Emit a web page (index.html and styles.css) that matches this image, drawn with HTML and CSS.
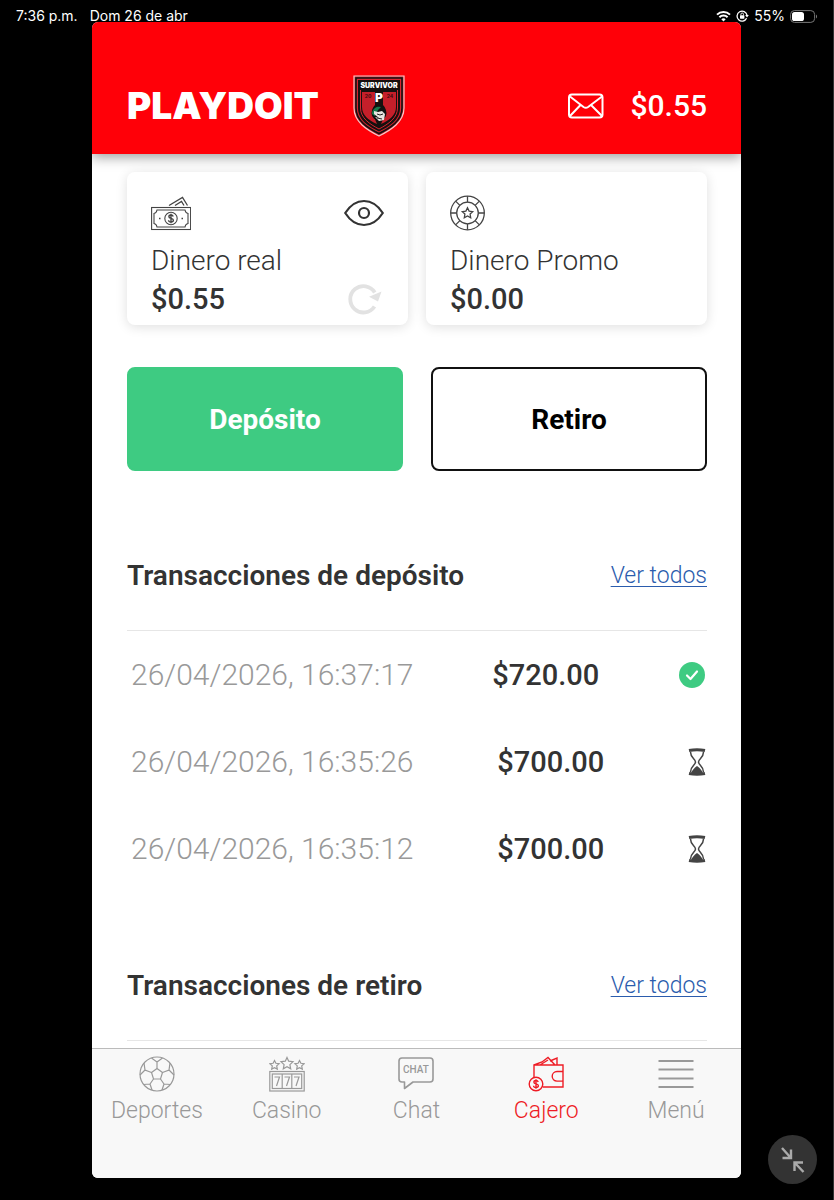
FILE: index.html
```html
<!DOCTYPE html>
<html lang="es">
<head>
  <meta charset="UTF-8" />
  <meta name="viewport" content="width=device-width, initial-scale=1" />
  <title>Playdoit - Cajero</title>
  <link rel="stylesheet" href="styles.css">
</head>
<body>

<div class="status-bar">
  <div class="status-left"><span>7:36 p.m.</span><span>Dom 26 de abr</span></div>
  <div class="status-right">
    <svg width="15" height="12" viewBox="0 0 15 12" fill="none" stroke="#fff" stroke-width="2">
      <path d="M1 4.6a9.3 9.3 0 0 1 13 0M3.4 7.3a5.8 5.8 0 0 1 8.2 0"/>
      <path d="M7.5 11.6 5.3 9.3a3.2 3.2 0 0 1 4.4 0z" fill="#fff" stroke="none"/>
    </svg>
    <svg width="13" height="12" viewBox="0 0 13 12" fill="none" stroke="#fff">
      <path d="M10.6 8.3A5 5 0 1 1 11 5.2" stroke-width="1.3"/>
      <path d="M9.2 5h3.6L11 7.4z" fill="#fff" stroke="none"/>
      <rect x="4" y="5.3" width="4.4" height="3.4" rx=".6" fill="#fff" stroke="none"/>
      <path d="M4.9 5.4V4.3a1.3 1.3 0 0 1 2.6 0v1.1" stroke-width=".9"/>
    </svg>
    <span>55%</span>
    <svg width="28" height="13" viewBox="0 0 28 13">
      <rect x=".6" y=".6" width="24" height="11.8" rx="3.8" fill="none" stroke="#777"/>
      <rect x="2" y="2" width="12" height="9" rx="2.6" fill="#fff"/>
      <path d="M26 4.5v4c1.4-.6 1.4-3.4 0-4z" fill="#777"/>
    </svg>
  </div>
</div>

<div class="app">
  <header>
    <a href="#" class="logo">PLAYDOIT</a>
    <a href="#" class="shield" title="Survivor">
      <svg width="52" height="62" viewBox="0 0 52 62">
        <path d="M1 1h50v32c0 14-13 22-25 28C14 55 1 47 1 33z" fill="#b5202b" stroke="#f5c9c9" stroke-width="1.2"/>
        <path d="M3 3h46v30c0 13-12 20-23 25.500C15 53 3 46 3 33z" fill="#d5242f" stroke="#111" stroke-width="1.6"/>
        <path d="M5 5h42v28c0 12-11 18.500-21 23.500C16 51.500 5 45 5 33z" fill="#15100f"/>
        <path d="M9 17h13v13c-4 4-3 8-1 12l3 7C15 45 9 40 9 32z" fill="#c51f2a"/>
        <path d="M43 17H30v13c4 4 3 8 1 12l-3 7c9-4 15-9 15-17z" fill="#c51f2a"/>
        <path d="M7.500 15v18c0 10 9 16 18.500 21C35.500 49 44.500 43 44.500 33V15" fill="none" stroke="#d5242f" stroke-width="1"/>
        <circle cx="26" cy="38" r="7.500" fill="#111"/>
        <path d="M19 39a7 7 0 0 1 9-7l-3 3-3 6z" fill="#167a4b"/>
        <path d="m21 36 4 1 4-1 3 3-1 6-5 1-4-4 4 1-5-4z" fill="#e9e6e2"/>
        <path d="m24 39 3 1 3-1M24 43l5 1" stroke="#222" stroke-width="1" fill="none"/>
        <text x="26" y="12.500" text-anchor="middle" class="shield-name">SURVIVOR</text>
        <text x="26" y="27" text-anchor="middle" class="shield-letter">P</text>
        <text x="15" y="23" text-anchor="middle" class="shield-year">20</text>
        <text x="37" y="23" text-anchor="middle" class="shield-year">24</text>
      </svg>
    </a>
    <a href="#" class="mail" title="Mensajes">
      <svg width="36" height="26" viewBox="0 0 36 26" fill="none" stroke="#fff" stroke-width="2" stroke-linejoin="round">
        <rect x="1" y="1.500" width="33.500" height="23" rx="3"/>
        <path d="M2 3.500 15.500 14q2.300 1.500 4.600 0L34 3.500M2 23l10.500-11M34 23 23 12"/>
      </svg>
    </a>
    <span class="balance">$0.55</span>
  </header>

  <main>
    <div class="wallets">
      <section class="wallet">
        <div class="wallet-row wallet-icons">
          <svg width="40" height="36" viewBox="0 0 40 36" fill="none" stroke="#444" stroke-width="1.100">
            <rect x=".6" y="12.500" width="39" height="22"/>
            <path d="M6 15h28q.5 3 3 3.500v10q-2.500.5-3 3.500H6q-.5-3-3-3.500v-10Q5.500 18 6 15z"/>
            <circle cx="20" cy="23.500" r="6.200"/>
            <path d="M22.200 21.500q-.4-1.500-2.300-1.500-2 0-2 1.700c0 2.200 4.500 1.300 4.500 3.600 0 1.100-.9 1.700-2.400 1.700-1.700 0-2.400-.8-2.500-1.800M20 18.700v9.600" stroke-width="1.400"/>
            <path d="M18 10.500 31.500 2.500l5 8M24 10.500 30.500 6.500l2.500 4" stroke-width="1.300"/>
            <path d="M8 23.500h1.500M30.500 23.500H32" stroke-width="1.600"/>
          </svg>
          <button class="icon-btn" title="Ocultar saldo">
            <svg width="40" height="36" viewBox="0 0 40 36" fill="none" stroke="#333" stroke-width="2.200">
              <path d="M1.200 18C6 10.500 12.500 6 20 6s14 4.500 18.800 12C34 25.500 27.500 30 20 30S6 25.500 1.200 18z" stroke-linejoin="round"/>
              <circle cx="20" cy="18" r="5"/>
            </svg>
          </button>
        </div>
        <h3>Dinero real</h3>
        <div class="wallet-row">
          <span class="amount">$0.55</span>
          <button class="icon-btn" title="Actualizar">
            <svg width="40" height="36" viewBox="0 0 40 36" fill="none" stroke="#e2e2e2" stroke-width="3.800">
              <path d="M30.500 25.500A13.200 13.200 0 1 1 30.800 11.500"/>
              <path d="M25 15.800 37.500 10.500 34 20.500z" fill="#e2e2e2" stroke="none"/>
            </svg>
          </button>
        </div>
      </section>

      <section class="wallet">
        <div class="wallet-row wallet-icons">
          <svg width="36" height="36" viewBox="0 0 36 36" fill="none" stroke="#444" stroke-width="1.300">
            <circle cx="17.500" cy="18" r="16.800"/>
            <circle cx="17.500" cy="18" r="10.800"/>
            <path d="M17.500 1.200v6M17.500 28.800v6M.7 18h6M28.300 18h6M5.600 6.100l4.300 4.300M25.100 25.600l4.300 4.300M5.600 29.900l4.300-4.300M25.100 10.400l4.300-4.300"/>
            <path d="m17.500 12.800 1.600 3.300 3.600.5-2.600 2.500.6 3.600-3.200-1.700-3.200 1.700.6-3.600-2.600-2.500 3.600-.5z"/>
          </svg>
        </div>
        <h3>Dinero Promo</h3>
        <div class="wallet-row"><span class="amount">$0.00</span></div>
      </section>
    </div>

    <div class="actions">
      <button class="btn btn-deposit">Depósito</button>
      <button class="btn btn-withdraw">Retiro</button>
    </div>

    <section class="transactions">
      <div class="section-head">
        <h2>Transacciones de depósito</h2>
        <a href="#">Ver todos</a>
      </div>
      <table>
        <tbody>
          <tr>
            <td class="date">26/04/2026, 16:37:17</td>
            <td class="amount">$720.00</td>
            <td class="state">
              <svg width="28" height="28" viewBox="0 0 28 28">
                <circle cx="14" cy="14" r="13" fill="#3ecb82"/>
                <path d="m9 14.500 3.500 3.500 6.500-7.500" fill="none" stroke="#fff" stroke-width="2.200" stroke-linecap="round" stroke-linejoin="round"/>
              </svg>
            </td>
          </tr>
          <tr>
            <td class="date">26/04/2026, 16:35:26</td>
            <td class="amount">$700.00</td>
            <td class="state">
              <svg width="18" height="28" viewBox="0 0 18 28" fill="none" stroke="#444">
                <path d="M1 2.500q8-1.600 16 0M1 25.500q8 1.600 16 0" stroke-width="3"/>
                <path d="M2.500 4c0 6 5 7 5 10s-5 4-5 10M15.500 4c0 6-5 7-5 10s5 4 5 10" stroke-width="1.500"/>
                <path d="M3 25.500q1-4 6-7.500 5 3.500 6 7.500z" fill="#444" stroke="none"/>
              </svg>
            </td>
          </tr>
          <tr>
            <td class="date">26/04/2026, 16:35:12</td>
            <td class="amount">$700.00</td>
            <td class="state">
              <svg width="18" height="28" viewBox="0 0 18 28" fill="none" stroke="#444">
                <path d="M1 2.500q8-1.600 16 0M1 25.500q8 1.600 16 0" stroke-width="3"/>
                <path d="M2.500 4c0 6 5 7 5 10s-5 4-5 10M15.500 4c0 6-5 7-5 10s5 4 5 10" stroke-width="1.500"/>
                <path d="M3 25.500q1-4 6-7.500 5 3.500 6 7.500z" fill="#444" stroke="none"/>
              </svg>
            </td>
          </tr>
        </tbody>
      </table>
    </section>

    <section class="transactions">
      <div class="section-head">
        <h2>Transacciones de retiro</h2>
        <a href="#">Ver todos</a>
      </div>
    </section>
  </main>

  <nav>
    <a href="#">
      <svg width="36" height="36" viewBox="0 0 36 36" fill="none" stroke="currentColor" stroke-width="1.200">
        <circle cx="18" cy="18" r="17"/>
        <path d="m18 12.500 5.500 4-2 6.500h-7l-2-6.500z"/>
        <path d="M18 12.500V6l-5.500-4M18 6l5.500-4M12.500 16.500 6 14l-1-7M6 14l-5 5M23.500 16.500 30 14l1-7M30 14l5 5M14.500 23 11 28l-6.500.5M11 28l2 6M21.500 23l3.500 5 6.500.5M25 28l-2 6"/>
      </svg>
      <span>Deportes</span>
    </a>
    <a href="#">
      <svg width="36" height="36" viewBox="0 0 36 36" fill="none" stroke="currentColor" stroke-width="1.200">
        <path d="m18 1.500 1.700 3.700 4.300.5-3.100 2.900.8 4.200-3.700-2-3.700 2 .8-4.200L12 5.700l4.300-.5zM5.500 4.500l1.400 2.800 3.200.4-2.400 2.200.6 3.200-2.800-1.500-2.800 1.500.6-3.200L.9 7.700l3.200-.4zM30.500 4.500l1.400 2.800 3.200.4-2.400 2.200.6 3.200-2.800-1.500-2.800 1.500.6-3.200-2.400-2.200 3.200-.4z"/>
        <rect x=".8" y="15.500" width="34.400" height="19.500"/>
        <rect x="3.300" y="18" width="29.400" height="14.500"/>
        <path d="M13.200 18v14.500M22.800 18v14.500M5.500 21h5l-3 9M15.500 21h5l-3 9M25 21h5l-3 9"/>
      </svg>
      <span>Casino</span>
    </a>
    <a href="#">
      <svg width="36" height="36" viewBox="0 0 36 36" fill="none" stroke="currentColor" stroke-width="1.600" stroke-linejoin="round">
        <path d="M4 2h28q3 0 3 3v18q0 3-3 3H15l-8.500 6.500V26H4q-3 0-3-3V5q0-3 3-3z"/>
        <text x="18" y="17" text-anchor="middle" class="chat-text">CHAT</text>
      </svg>
      <span>Chat</span>
    </a>
    <a href="#" class="active">
      <svg width="36" height="36" viewBox="0 0 36 36" fill="none" stroke="currentColor" stroke-width="1.400">
        <path d="M6 21V9h29v22H15M35 15.500h-6a4.800 4.800 0 0 0 0 9.600h6M6 9l8-3 6-4.500L27 9M22 5l7-3v7M12 9l8-5"/>
        <circle cx="8" cy="28" r="6.800"/>
        <path d="M10.200 26q-.4-1.500-2.300-1.500-2 0-2 1.700c0 2.200 4.500 1.300 4.500 3.600 0 1.100-.9 1.700-2.400 1.700-1.700 0-2.400-.8-2.500-1.800M8 23.200v9.600"/>
      </svg>
      <span>Cajero</span>
    </a>
    <a href="#">
      <svg width="36" height="36" viewBox="0 0 36 36" stroke="currentColor" stroke-width="2">
        <path d="M.5 5h35M.5 13.500h35M.5 22.500h35M.5 31h35"/>
      </svg>
      <span>Menú</span>
    </a>
  </nav>
</div>

<button class="shrink-btn" title="Reducir">
  <svg width="24" height="26" viewBox="0 0 24 26" fill="none" stroke="#aaa" stroke-width="2.400">
    <path d="m1 1 8.500 9.500M10 2.500V11H1.500M22.500 25 14 16M13.500 24v-8.500H22"/>
  </svg>
</button>

</body>
</html>
```
FILE: styles.css
```css
* {
  box-sizing: border-box;
}
body {
  margin: 0;
  background: #000;
  color: #333;
  font-family: Roboto, "Liberation Sans", sans-serif;
  height: 100vh;
  overflow: hidden;
  border-right: 1px solid #333;
}
h2, h3 {
  margin: 0;
}
svg {
  display: block;
}
button {
  font-family: inherit;
  cursor: pointer;
}

/* barra de estado */
.status-bar {
  display: flex;
  justify-content: space-between;
  height: 22px;
  padding: 8px 15px 0 16px;
  color: #fff;
  font-family: Inter, sans-serif;
  font-size: 14px;
  line-height: 16px;
}
.status-left,
.status-right {
  display: flex;
  align-items: center;
  height: 16px;
}
.status-left {
  gap: 12px;
}
.status-right {
  gap: 5px;
}

/* ventana de la app */
.app {
  display: flex;
  flex-direction: column;
  height: calc(100vh - 44px);
  margin: 0 92px;
  background: #fff;
  border-radius: 6px;
  overflow: hidden;
}
header {
  display: flex;
  align-items: center;
  flex: none;
  height: 132px;
  padding: 35px 34px 0 35px;
  background: #ff0008;
  color: #fff;
  box-shadow: 0 3px 12px rgba(0,0,0,0.4);
  position: relative;
  z-index: 1;
}
.logo {
  color: #fff;
  font-family: Inter, sans-serif;
  font-size: 37px;
  font-weight: 900;
  text-decoration: none;
}
.shield {
  margin-left: 34px;
}
.shield-name {
  fill: #fff;
  font: 900 7px Inter, sans-serif;
}
.shield-letter {
  fill: #fff;
  font: 900 12px Inter, sans-serif;
}
.shield-year {
  fill: #3a0b0e;
  font: 700 5px Inter, sans-serif;
}
.mail {
  margin-left: auto;
}
.balance {
  margin-left: 26px;
  font-size: 30px;
  font-weight: 500;
}

main {
  flex: 1;
  min-height: 0;
  padding: 18px 34px 0 35px;
  overflow: hidden;
}
.wallets {
  display: grid;
  grid-template-columns: 1fr 1fr;
  gap: 18px;
}
.wallet {
  padding: 23px 24px 6px;
  border-radius: 8px;
  box-shadow: 0 2px 12px rgba(0,0,0,0.13);
}
.wallet-row {
  display: flex;
  justify-content: space-between;
  align-items: center;
  height: 40px;
}
.wallet-icons {
  height: 36px;
  margin-bottom: 11px;
}
.wallet h3 {
  font-size: 28px;
  font-weight: 300;
  line-height: 37px;
}
.amount {
  font-size: 29px;
  font-weight: 500;
}
.icon-btn {
  padding: 0;
  border: none;
  background: none;
}

.actions {
  display: grid;
  grid-template-columns: 1fr 1fr;
  gap: 28px;
  margin-top: 42px;
  margin-bottom: 50px;
}
.btn {
  height: 104px;
  border: 2px solid #111;
  border-radius: 8px;
  background: #fff;
  color: #000;
  font-size: 28px;
  font-weight: 700;
}
.btn-deposit {
  border-color: #3ecb82;
  background: #3ecb82;
  color: #fff;
}

/* transacciones */
.transactions {
  margin-bottom: 39px;
}
.section-head {
  display: flex;
  justify-content: space-between;
  align-items: center;
  height: 110px;
  border-bottom: 1px solid #e6e6e6;
}
.section-head h2 {
  font-size: 28px;
  font-weight: 600;
}
.section-head a {
  color: #2b5cad;
  font-size: 23px;
  font-weight: 300;
  text-decoration-thickness: 1px;
  text-underline-offset: 3px;
}
table,
tbody {
  display: block;
}
tr {
  display: flex;
  justify-content: space-between;
  align-items: center;
  height: 87px;
  padding: 0 1px 0 4px;
}
td {
  padding: 0;
}
.date {
  color: #999;
  font-size: 30px;
  font-weight: 300;
}

/* menú inferior */
nav {
  display: flex;
  flex: none;
  height: 130px;
  padding-top: 7px;
  background: #f8f8f8;
  border-top: 1px solid #bbb;
}
nav a {
  display: flex;
  flex: 1;
  flex-direction: column;
  align-items: center;
  color: #999;
  font-size: 23px;
  font-weight: 300;
  line-height: 38px;
  text-decoration: none;
}
nav .active {
  color: #ee1c25;
}
.chat-text {
  fill: currentColor;
  stroke: none;
  font: 500 10px Roboto, sans-serif;
}

.shrink-btn {
  display: flex;
  align-items: center;
  justify-content: center;
  position: fixed;
  right: 17px;
  bottom: 16px;
  width: 49px;
  height: 49px;
  padding: 0;
  border: none;
  border-radius: 50%;
  background: #333;
}
```
